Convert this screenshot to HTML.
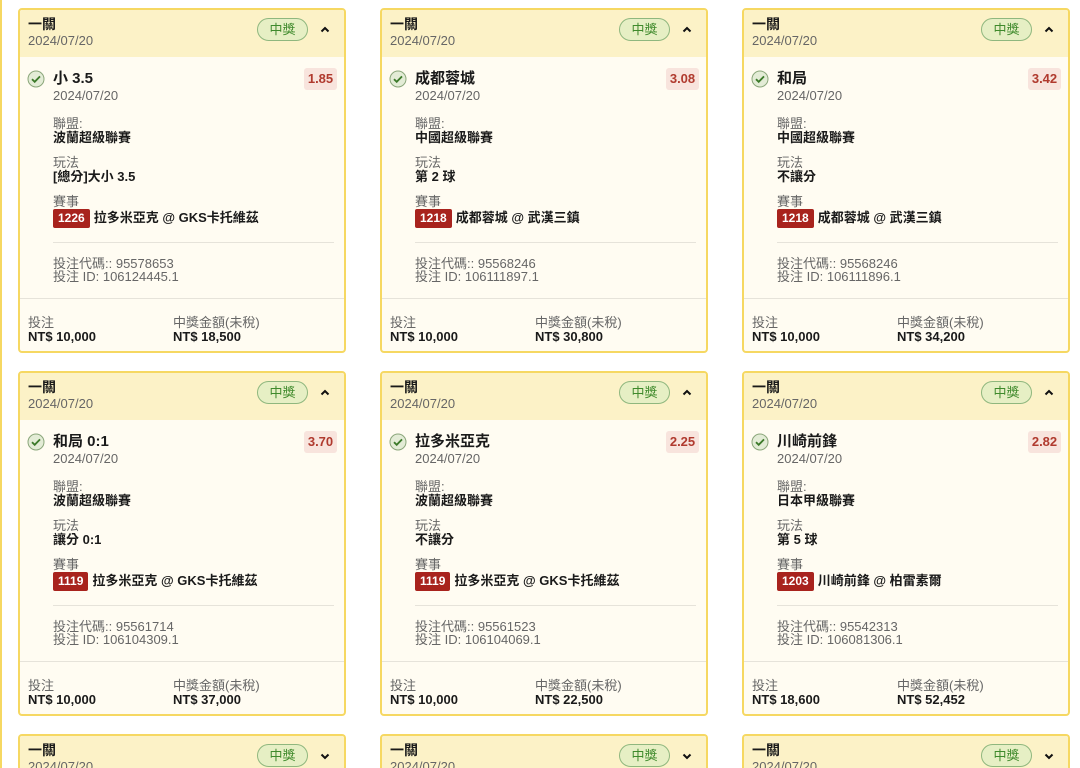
<!DOCTYPE html>
<html style="width:1080px;height:768px;overflow:hidden"><head><meta charset="utf-8"><style>
*{box-sizing:border-box;margin:0;padding:0}
body{width:1080px;height:768px;overflow:hidden;background:#fff;font-family:"Liberation Sans","Noto Sans CJK TC",sans-serif;color:#1a1a1a;position:relative}
.edge{position:absolute;left:0;top:0;width:2px;height:768px;background:#f6d862}
.card{position:absolute;width:328px;height:345px;border:2px solid #f6d862;border-radius:4px;background:#fffcf2;overflow:hidden}
.card>*{position:absolute;white-space:nowrap}
.hd{left:0;top:0;width:100%;height:47px;background:#fcf2c7}
.t{font-size:14px;font-weight:bold;line-height:15px;left:8px;top:7px}
.d{font-size:13px;color:#666;line-height:14px}
.badge{left:237px;top:8px;width:51px;height:23px;border:1px solid #8fb77e;border-radius:12px;background:#e6efc4;color:#3f8a2c;font-size:13px;text-align:center;line-height:21px}
.chev{left:297px;top:12px;width:16px;height:16px}
.chk{left:7px;top:60px;width:18px;height:18px}
.nm{left:33px;top:61px;font-size:15px;font-weight:bold;line-height:16px}
.odds{left:284px;top:58px;height:22px;width:33px;background:#f8e4dd;border-radius:3px;color:#b03a2e;font-size:13px;font-weight:bold;text-align:center;line-height:22px}
.l{left:33px;font-size:13px;color:#666;line-height:14px}
.v{left:33px;font-size:13px;font-weight:bold;line-height:14px}
.tag{left:33px;top:198px;height:19px;font-size:13px;font-weight:bold;line-height:19px}
.tag b{display:inline-block;background:#a8231d;color:#fff;font-size:12px;padding:0 5px;border-radius:2px;margin-right:4px;height:19px}
.hr{left:33px;top:232px;width:281px;height:1px;background:#e6e3da}
.hr2{left:0;top:288px;width:100%;height:1px;background:#e6e3da}
</style></head><body>
<div class="edge"></div>
<div id="c"></div>
<script>
const data=[
["小 3.5","1.85","波蘭超級聯賽","[總分]大小 3.5","1226","拉多米亞克 @ GKS卡托維茲","95578653","106124445.1","NT$ 10,000","NT$ 18,500"],
["成都蓉城","3.08","中國超級聯賽","第 2 球","1218","成都蓉城 @ 武漢三鎮","95568246","106111897.1","NT$ 10,000","NT$ 30,800"],
["和局","3.42","中國超級聯賽","不讓分","1218","成都蓉城 @ 武漢三鎮","95568246","106111896.1","NT$ 10,000","NT$ 34,200"],
["和局 0:1","3.70","波蘭超級聯賽","讓分 0:1","1119","拉多米亞克 @ GKS卡托維茲","95561714","106104309.1","NT$ 10,000","NT$ 37,000"],
["拉多米亞克","2.25","波蘭超級聯賽","不讓分","1119","拉多米亞克 @ GKS卡托維茲","95561523","106104069.1","NT$ 10,000","NT$ 22,500"],
["川崎前鋒","2.82","日本甲級聯賽","第 5 球","1203","川崎前鋒 @ 柏雷素爾","95542313","106081306.1","NT$ 18,600","NT$ 52,452"],
null,null,null];
const xs=[18,380,742],ys=[8,371,734];let h='';
data.forEach((r,i)=>{const x=xs[i%3],y=ys[Math.floor(i/3)];const up=i<6;
h+=`<div class="card" style="left:${x}px;top:${y}px;${r?'':'height:34px;border-bottom:none;border-radius:4px 4px 0 0'}"><div class="hd"></div><div class="t">一關</div><div class="d" style="left:8px;top:24px">2024/07/20</div><div class="badge">中獎</div>
<svg class="chev" viewBox="0 0 16 16"><path d="${up?'M4.5 9.5l3.5-3.5 3.5 3.5':'M4.5 6.5l3.5 3.5 3.5-3.5'}" fill="none" stroke="#111" stroke-width="2"/></svg>`;
if(r)h+=`<svg class="chk" viewBox="0 0 18 18"><circle cx="9" cy="9" r="8" fill="#e3ecd6" stroke="#8aa67a" stroke-width="1"/><path d="M5 9.2l2.7 2.6L13 6.4" fill="none" stroke="#3c7a2a" stroke-width="1.8"/></svg>
<div class="nm">${r[0]}</div><div class="odds">${r[1]}</div><div class="d" style="left:33px;top:79px">2024/07/20</div>
<div class="l" style="top:107px">聯盟:</div><div class="v" style="top:121px">${r[2]}</div>
<div class="l" style="top:146px">玩法</div><div class="v" style="top:160px">${r[3]}</div>
<div class="l" style="top:185px">賽事</div><div class="tag"><b>${r[4]}</b>${r[5]}</div>
<div class="hr"></div><div class="l" style="top:247px">投注代碼:: ${r[6]}</div><div class="l" style="top:260px">投注 ID: ${r[7]}</div>
<div class="hr2"></div><div class="l" style="left:8px;top:306px">投注</div><div class="v" style="left:8px;top:320px">${r[8]}</div>
<div class="l" style="left:153px;top:306px">中獎金額(未稅)</div><div class="v" style="left:153px;top:320px">${r[9]}</div>`;
h+=`</div>`;});
document.getElementById('c').innerHTML=h;
</script>
</body></html>
